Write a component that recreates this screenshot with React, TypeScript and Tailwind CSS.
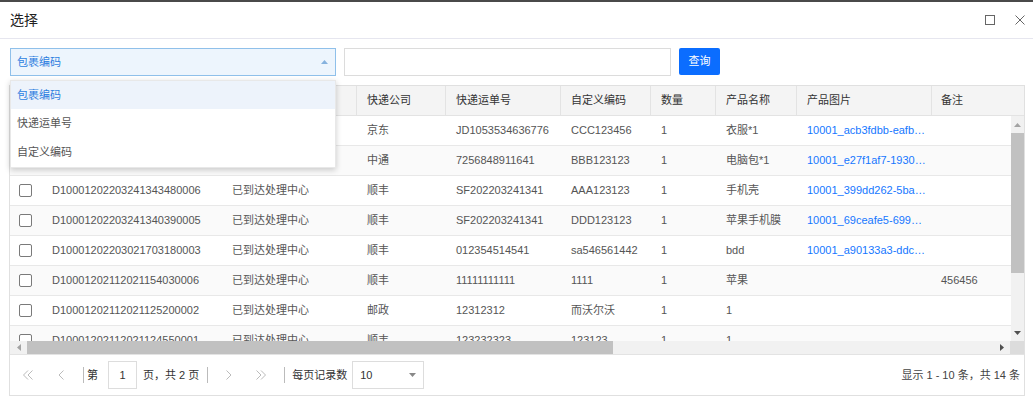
import React from 'react';

type Row = {
  no: string;
  status: string;
  co: string;
  track: string;
  code: string;
  qty: string;
  name: string;
  img: string;
  note: string;
};

const rows: Row[] = [
  { no: '', status: '', co: '京东', track: 'JD1053534636776', code: 'CCC123456', qty: '1', name: '衣服*1', img: '10001_acb3fdbb-eafb-4c2e-8f1a.png', note: '' },
  { no: '', status: '', co: '中通', track: '7256848911641', code: 'BBB123123', qty: '1', name: '电脑包*1', img: '10001_e27f1af7-1930-4d8b-b2c1.png', note: '' },
  { no: 'D10001202203241343480006', status: '已到达处理中心', co: '顺丰', track: 'SF202203241341', code: 'AAA123123', qty: '1', name: '手机壳', img: '10001_399dd262-5ba1-47c0-a3e2.png', note: '' },
  { no: 'D10001202203241340390005', status: '已到达处理中心', co: '顺丰', track: 'SF202203241341', code: 'DDD123123', qty: '1', name: '苹果手机膜', img: '10001_69ceafe5-6991-4f0a-9b7d.png', note: '' },
  { no: 'D10001202203021703180003', status: '已到达处理中心', co: '顺丰', track: '012354514541', code: 'sa546561442', qty: '1', name: 'bdd', img: '10001_a90133a3-ddc2-4e61-8c5f.png', note: '' },
  { no: 'D10001202112021154030006', status: '已到达处理中心', co: '顺丰', track: '11111111111', code: '1111', qty: '1', name: '苹果', img: '', note: '456456' },
  { no: 'D10001202112021125200002', status: '已到达处理中心', co: '邮政', track: '12312312', code: '而沃尔沃', qty: '1', name: '1', img: '', note: '' },
  { no: 'D10001202112021124550001', status: '已到达处理中心', co: '顺丰', track: '123232323', code: '123123', qty: '1', name: '1', img: '', note: '' },
];

const headers: { label: string; w: string }[] = [
  { label: '', w: 'w-[32px]' },
  { label: '', w: 'w-[180px]' },
  { label: '', w: 'w-[135px]' },
  { label: '快递公司', w: 'w-[89px]' },
  { label: '快递运单号', w: 'w-[115px]' },
  { label: '自定义编码', w: 'w-[90px]' },
  { label: '数量', w: 'w-[65px]' },
  { label: '产品名称', w: 'w-[81px]' },
  { label: '产品图片', w: 'w-[135px]' },
];

function Tri({ dir, color }: { dir: 'up' | 'down' | 'left' | 'right'; color: string }) {
  const pts: Record<string, string> = {
    up: '0,4 3.5,0 7,4',
    down: '0,0 7,0 3.5,4',
    left: '4,0 4,7 0,3.5',
    right: '0,0 4,3.5 0,7',
  };
  const vertical = dir === 'up' || dir === 'down';
  return (
    <svg width={vertical ? 7 : 4} height={vertical ? 4 : 7} viewBox={vertical ? '0 0 7 4' : '0 0 4 7'}>
      <polygon points={pts[dir]} fill={color} />
    </svg>
  );
}

function Checkbox() {
  return <div className="w-[13px] h-[13px] rounded-[2px] border border-[#7a7a7a] bg-white" />;
}

export default function App() {
  return (
    <div className="w-[1033px] h-[397px] bg-white overflow-hidden relative flex flex-col font-['Liberation_Sans','Noto_Sans_CJK_SC',sans-serif] text-[11px] text-[#555]">
      <div className="h-[2px] bg-[#4a4a4a] shrink-0" />
      {/* dialog header */}
      <div className="h-[37px] shrink-0 flex items-center border-b border-[#e6e6ef] pl-[10px] pr-[8px]">
        <span className="text-[14px] text-[#222]">选择</span>
        <div className="ml-auto flex items-center gap-[20px]">
          <div className="w-[10px] h-[10px] border border-[#666]" />
          <svg width="10" height="10" viewBox="0 0 10 10">
            <path d="M0.5 0.5 L9.5 9.5 M9.5 0.5 L0.5 9.5" stroke="#666" strokeWidth="1" />
          </svg>
        </div>
      </div>

      {/* toolbar */}
      <div className="shrink-0 flex items-start pt-[9px] pl-[10px] h-[46px]">
        <div className="w-[326px] h-[28px] border border-[#8fc0ea] bg-[#edf5fd] flex items-center pl-[6px] pr-[6px]">
          <span className="text-[#2d7fe0] text-[11px]">包裹编码</span>
          <div className="ml-auto mr-[1px]">
            <Tri dir="up" color="#86b2de" />
          </div>
        </div>
        <div className="ml-[8px] w-[327px] h-[28px] border border-[#dcdcdc] bg-white" />
        <div className="ml-[8px] w-[41px] h-[27px] rounded-[2px] bg-[#0b6dff] text-white text-[11px] flex items-center justify-center">
          查询
        </div>
      </div>

      {/* table + pagination wrapper */}
      <div className="ml-[9px] w-[1016px] border border-[#e0e0e0] flex flex-col shrink-0">
        {/* header row */}
        <div className="h-[30px] flex bg-[#f4f4f4] border-b border-[#e3e3e3] text-[#333]">
          {headers.map((h, i) => (
            <div key={i} className={`${h.w} shrink-0 h-full flex items-center pl-[10px] border-r border-[#e3e3e3]`}>
              {h.label}
            </div>
          ))}
          <div className="flex-1 h-full flex items-center pl-[9px]">备注</div>
        </div>

        {/* body */}
        <div className="h-[225px] flex">
          <div className="flex-1 overflow-hidden">
            {rows.map((r, i) => (
              <div
                key={i}
                className={`h-[30px] flex items-center border-b border-[#e8e8e8] ${i % 2 === 1 ? 'bg-[#fafafa]' : 'bg-white'}`}
              >
                <div className="w-[32px] shrink-0 pl-[9px] flex items-center">
                  <Checkbox />
                </div>
                <div className="w-[180px] shrink-0 pl-[10px]">{r.no}</div>
                <div className="w-[135px] shrink-0 pl-[10px]">{r.status}</div>
                <div className="w-[89px] shrink-0 pl-[10px]">{r.co}</div>
                <div className="w-[115px] shrink-0 pl-[10px]">{r.track}</div>
                <div className="w-[90px] shrink-0 pl-[10px]">{r.code}</div>
                <div className="w-[65px] shrink-0 pl-[10px]">{r.qty}</div>
                <div className="w-[81px] shrink-0 pl-[10px]">{r.name}</div>
                <div className="w-[135px] shrink-0 pl-[10px] pr-[5px] truncate text-[#1677ff]">{r.img}</div>
                <div className="flex-1 pl-[9px] whitespace-nowrap">{r.note}</div>
              </div>
            ))}
          </div>
          {/* vertical scrollbar */}
          <div className="w-[13px] shrink-0 bg-[#f1f1f1] flex flex-col">
            <div className="h-[17px] flex items-center justify-center">
              <Tri dir="up" color="#a3a3a3" />
            </div>
            <div className="h-[140px] bg-[#c1c1c1]" />
            <div className="flex-1" />
            <div className="h-[17px] flex items-center justify-center">
              <Tri dir="down" color="#505050" />
            </div>
          </div>
        </div>

        {/* horizontal scrollbar */}
        <div className="h-[13px] flex">
          <div className="flex-1 bg-[#f1f1f1] flex items-stretch">
            <div className="w-[17px] flex items-center justify-center">
              <Tri dir="left" color="#a3a3a3" />
            </div>
            <div className="w-[586px] bg-[#c1c1c1]" />
            <div className="flex-1" />
            <div className="w-[17px] flex items-center justify-center">
              <Tri dir="right" color="#505050" />
            </div>
          </div>
          <div className="w-[14px] bg-[#dcdcdc]" />
        </div>

        {/* pagination */}
        <div className="h-[41px] border-t border-[#e3e3e3] flex items-center text-[#333]">
          <div className="w-[36px] flex justify-center text-[#bbb]">
            <svg width="12" height="12" viewBox="0 0 12 12" fill="none" stroke="#bbb" strokeWidth="1">
              <path d="M6 1.5 L1.5 6 L6 10.5 M10.5 1.5 L6 6 L10.5 10.5" />
            </svg>
          </div>
          <div className="w-[30px] flex justify-center">
            <svg width="7" height="12" viewBox="0 0 7 12" fill="none" stroke="#bbb" strokeWidth="1">
              <path d="M5.5 1.5 L1 6 L5.5 10.5" />
            </svg>
          </div>
          <div className="ml-[7px] w-[1px] h-[16px] bg-[#bbb]" />
          <span className="ml-[3px]">第</span>
          <div className="ml-[10px] w-[29px] h-[28px] border border-[#ddd] flex items-center justify-center">1</div>
          <span className="ml-[6px]">页，共 2 页</span>
          <div className="ml-[8px] w-[1px] h-[16px] bg-[#bbb]" />
          <div className="ml-[5px] w-[30px] flex justify-center">
            <svg width="7" height="12" viewBox="0 0 7 12" fill="none" stroke="#bbb" strokeWidth="1">
              <path d="M1.5 1.5 L6 6 L1.5 10.5" />
            </svg>
          </div>
          <div className="w-[36px] flex justify-center">
            <svg width="12" height="12" viewBox="0 0 12 12" fill="none" stroke="#bbb" strokeWidth="1">
              <path d="M1.5 1.5 L6 6 L1.5 10.5 M6 1.5 L10.5 6 L6 10.5" />
            </svg>
          </div>
          <div className="ml-[5px] w-[1px] h-[16px] bg-[#bbb]" />
          <span className="ml-[7px]">每页记录数</span>
          <div className="ml-[5px] w-[72px] h-[28px] border border-[#ddd] flex items-center pl-[7px] pr-[7px]">
            <span>10</span>
            <div className="ml-auto">
              <Tri dir="down" color="#888" />
            </div>
          </div>
          <span className="ml-auto pr-[4px] text-[#444]">显示 1 - 10 条，共 14 条</span>
        </div>
      </div>

      {/* open dropdown menu */}
      <div className="absolute left-[10px] top-[80px] w-[326px] bg-white shadow-[0_2px_6px_rgba(0,0,0,0.2)] border border-[#e8e8e8] py-0">
        <div className="h-[28px] flex items-center pl-[6px] bg-[#edf3fb] text-[#2d7fe0]">包裹编码</div>
        <div className="h-[29px] flex items-center pl-[6px] text-[#555]">快递运单号</div>
        <div className="h-[29px] flex items-center pl-[6px] text-[#555]">自定义编码</div>
      </div>
    </div>
  );
}
